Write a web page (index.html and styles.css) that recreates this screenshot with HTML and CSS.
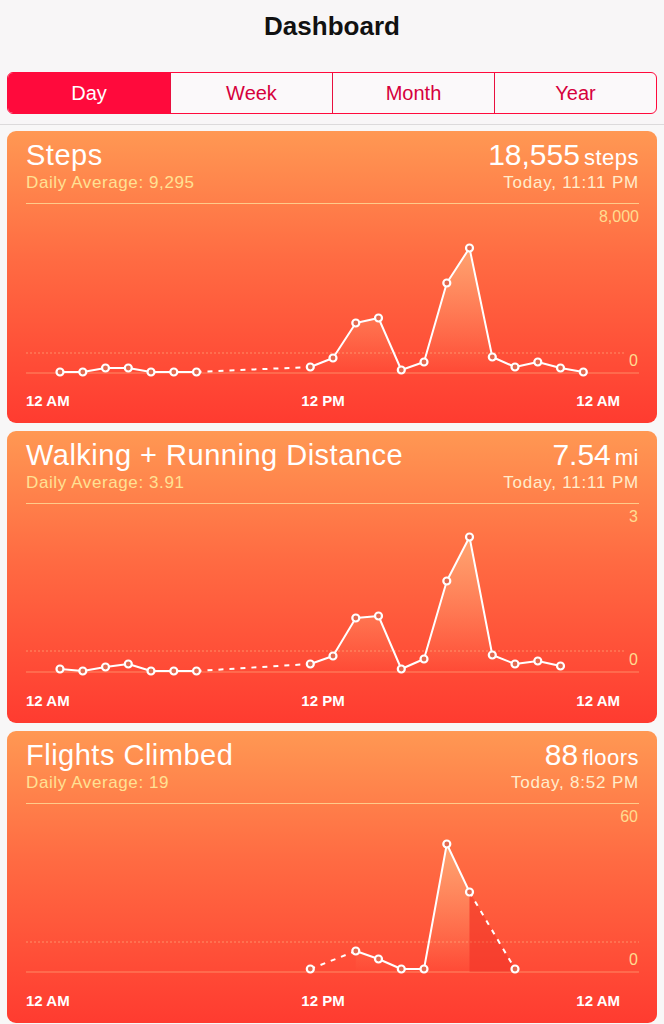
FILE: index.html
```html
<!DOCTYPE html>
<html lang="en">
<head>
    <meta charset="UTF-8">
    <meta name="viewport" content="width=device-width, initial-scale=1.0">
    <title>Dashboard</title>
    <link rel="stylesheet" href="styles.css">
</head>
<body>

    <div class="top">
        <h1>Dashboard</h1>
        <div class="segments">
            <span class="active">Day</span>
            <span>Week</span>
            <span>Month</span>
            <span>Year</span>
        </div>
    </div>

    <div class="cards">

        <!-- Steps -->
        <div class="card">
            <div class="card-head">
                <div>
                    <div class="name">Steps</div>
                    <div class="avg">Daily Average: 9,295</div>
                </div>
                <div class="right">
                    <div class="total">18,555<small>steps</small></div>
                    <div class="when">Today, 11:11 PM</div>
                </div>
            </div>
            <div class="chart">
                <svg width="613" height="182" viewBox="0 0 613 182">
                    <defs>
                        <linearGradient id="fill1" x1="0" y1="40" x2="0" y2="168" gradientUnits="userSpaceOnUse">
                            <stop offset="0" stop-color="#ffc890" stop-opacity="0.6"/>
                            <stop offset="1" stop-color="#ffc890" stop-opacity="0"/>
                        </linearGradient>
                    </defs>
                    <text class="lbl" x="613" y="18">8,000</text>
                    <line class="grid-dash" x1="0" y1="149" x2="600" y2="149"/>
                    <line class="grid-base" x1="0" y1="169" x2="613" y2="169"/>
                    <text class="lbl" x="612" y="162">0</text>
                    <polygon fill="url(#fill1)" points="284.3,163 307,154 329.8,119 352.5,114 375.3,166 398,158 420.8,79 443.5,44 466.3,153 489,163 511.8,158 534.5,164 557.3,168 557.3,169 284.3,169"/>
                    <line class="dash" x1="170.5" y1="168" x2="284.3" y2="163"/>
                    <polyline class="line" points="34,168 56.8,168 79.5,164 102.3,164 125,168 147.8,168 170.5,168"/>
                    <polyline class="line" points="284.3,163 307,154 329.8,119 352.5,114 375.3,166 398,158 420.8,79 443.5,44 466.3,153 489,163 511.8,158 534.5,164 557.3,168"/>
                    <g class="dots">
                        <circle cx="34" cy="168" r="3"/><circle cx="56.8" cy="168" r="3"/><circle cx="79.5" cy="164" r="3"/>
                        <circle cx="102.3" cy="164" r="3"/><circle cx="125" cy="168" r="3"/><circle cx="147.8" cy="168" r="3"/>
                        <circle cx="170.5" cy="168" r="3"/><circle cx="284.3" cy="163" r="3"/><circle cx="307" cy="154" r="3"/>
                        <circle cx="329.8" cy="119" r="3"/><circle cx="352.5" cy="114" r="3"/><circle cx="375.3" cy="166" r="3"/>
                        <circle cx="398" cy="158" r="3"/><circle cx="420.8" cy="79" r="3"/><circle cx="443.5" cy="44" r="3"/>
                        <circle cx="466.3" cy="153" r="3"/><circle cx="489" cy="163" r="3"/><circle cx="511.8" cy="158" r="3"/>
                        <circle cx="534.5" cy="164" r="3"/><circle cx="557.3" cy="168" r="3"/>
                    </g>
                </svg>
            </div>
            <div class="axis"><span>12 AM</span><span>12 PM</span><span>12 AM</span></div>
        </div>

        <!-- Walking + Running Distance -->
        <div class="card">
            <div class="card-head">
                <div>
                    <div class="name">Walking + Running Distance</div>
                    <div class="avg">Daily Average: 3.91</div>
                </div>
                <div class="right">
                    <div class="total">7.54<small>mi</small></div>
                    <div class="when">Today, 11:11 PM</div>
                </div>
            </div>
            <div class="chart">
                <svg width="613" height="182" viewBox="0 0 613 182">
                    <defs>
                        <linearGradient id="fill2" x1="0" y1="30" x2="0" y2="168" gradientUnits="userSpaceOnUse">
                            <stop offset="0" stop-color="#ffc890" stop-opacity="0.6"/>
                            <stop offset="1" stop-color="#ffc890" stop-opacity="0"/>
                        </linearGradient>
                    </defs>
                    <text class="lbl" x="612" y="18">3</text>
                    <line class="grid-dash" x1="0" y1="147" x2="600" y2="147"/>
                    <line class="grid-base" x1="0" y1="168" x2="613" y2="168"/>
                    <text class="lbl" x="612" y="161">0</text>
                    <polygon fill="url(#fill2)" points="284.3,160 307,152 329.8,114 352.5,112 375.3,165 398,155 420.8,77 443.5,33 466.3,151 489,160 511.8,157 534.5,162 534.5,168 284.3,168"/>
                    <line class="dash" x1="170.5" y1="167" x2="284.3" y2="160"/>
                    <polyline class="line" points="34,165 56.8,167 79.5,163 102.3,160 125,167 147.8,167 170.5,167"/>
                    <polyline class="line" points="284.3,160 307,152 329.8,114 352.5,112 375.3,165 398,155 420.8,77 443.5,33 466.3,151 489,160 511.8,157 534.5,162"/>
                    <g class="dots">
                        <circle cx="34" cy="165" r="3"/><circle cx="56.8" cy="167" r="3"/><circle cx="79.5" cy="163" r="3"/>
                        <circle cx="102.3" cy="160" r="3"/><circle cx="125" cy="167" r="3"/><circle cx="147.8" cy="167" r="3"/>
                        <circle cx="170.5" cy="167" r="3"/><circle cx="284.3" cy="160" r="3"/><circle cx="307" cy="152" r="3"/>
                        <circle cx="329.8" cy="114" r="3"/><circle cx="352.5" cy="112" r="3"/><circle cx="375.3" cy="165" r="3"/>
                        <circle cx="398" cy="155" r="3"/><circle cx="420.8" cy="77" r="3"/><circle cx="443.5" cy="33" r="3"/>
                        <circle cx="466.3" cy="151" r="3"/><circle cx="489" cy="160" r="3"/><circle cx="511.8" cy="157" r="3"/>
                        <circle cx="534.5" cy="162" r="3"/>
                    </g>
                </svg>
            </div>
            <div class="axis"><span>12 AM</span><span>12 PM</span><span>12 AM</span></div>
        </div>

        <!-- Flights Climbed -->
        <div class="card">
            <div class="card-head">
                <div>
                    <div class="name">Flights Climbed</div>
                    <div class="avg">Daily Average: 19</div>
                </div>
                <div class="right">
                    <div class="total">88<small>floors</small></div>
                    <div class="when">Today, 8:52 PM</div>
                </div>
            </div>
            <div class="chart">
                <svg width="613" height="182" viewBox="0 0 613 182">
                    <defs>
                        <linearGradient id="fill3" x1="0" y1="40" x2="0" y2="168" gradientUnits="userSpaceOnUse">
                            <stop offset="0" stop-color="#ffc890" stop-opacity="0.6"/>
                            <stop offset="1" stop-color="#ffc890" stop-opacity="0"/>
                        </linearGradient>
                    </defs>
                    <text class="lbl" x="612" y="18">60</text>
                    <line class="grid-dash" x1="0" y1="138" x2="613" y2="138"/>
                    <line class="grid-base" x1="0" y1="168" x2="613" y2="168"/>
                    <text class="lbl" x="612" y="161">0</text>
                    <polygon fill="url(#fill3)" points="329.8,147 352.5,155 375.3,165 398,165 420.8,40 443.5,88 443.5,168 329.8,168"/>
                    <polygon class="gap-fill" points="443.5,88 489,165 489,168 443.5,168"/>
                    <line class="dash" x1="284.3" y1="165" x2="329.8" y2="147"/>
                    <line class="dash" x1="443.5" y1="88" x2="489" y2="165"/>
                    <polyline class="line" points="329.8,147 352.5,155 375.3,165 398,165 420.8,40 443.5,88"/>
                    <g class="dots">
                        <circle cx="284.3" cy="165" r="3"/><circle cx="329.8" cy="147" r="3"/><circle cx="352.5" cy="155" r="3"/>
                        <circle cx="375.3" cy="165" r="3"/><circle cx="398" cy="165" r="3"/><circle cx="420.8" cy="40" r="3"/>
                        <circle cx="443.5" cy="88" r="3"/><circle cx="489" cy="165" r="3"/>
                    </g>
                </svg>
            </div>
            <div class="axis"><span>12 AM</span><span>12 PM</span><span>12 AM</span></div>
        </div>

    </div>

</body>
</html>
```

FILE: styles.css
```css
* {
    box-sizing: border-box;
}
body {
    margin: 0;
    background-color: #f8f7f7;
    font-family: "Liberation Sans", Arial, sans-serif;
}
.top {
    background: #f8f6f7;
    padding: 12px 7px 10px;
    border-bottom: 1px solid #dcdadb;
}
.top h1 {
    margin: 0;
    font-size: 26px;
    line-height: 28px;
    font-weight: bold;
    text-align: center;
    color: #111;
}
.segments {
    display: grid;
    grid-template-columns: repeat(4, 1fr);
    margin-top: 32px;
    height: 42px;
    border: 1.5px solid #ff0a3c;
    border-radius: 6px;
    overflow: hidden;
    background: #fbf9fa;
}
.segments span {
    display: flex;
    align-items: center;
    justify-content: center;
    font-size: 20px;
    color: #d6003c;
    border-left: 1.5px solid #e8103f;
}
.segments span:first-child {
    border-left: none;
}
.segments .active {
    background: #ff0a3c;
    color: #fff;
}
.cards {
    display: flex;
    flex-direction: column;
    gap: 8px;
    padding: 6px 7px 8px;
}
.card {
    border-radius: 9px;
    background: linear-gradient(#ff9853, #ff6a42 45%, #ff3b30);
    color: #fff;
    padding-bottom: 9px;
}
.card-head {
    display: flex;
    justify-content: space-between;
    height: 72px;
    padding: 8px 18px 0 19px;
}
.name {
    font-size: 29px;
    line-height: 32px;
    letter-spacing: 0.5px;
}
.avg {
    margin-top: 1px;
    font-size: 17px;
    line-height: 22px;
    letter-spacing: 0.6px;
    color: #ffe194;
}
.right {
    text-align: right;
}
.total {
    height: 32px;
    font-size: 30px;
    line-height: 32px;
}
.total small {
    margin-left: 4px;
    font-size: 22px;
    line-height: 0;
    letter-spacing: 0.5px;
}
.when {
    margin-top: 1px;
    font-size: 17px;
    line-height: 22px;
    letter-spacing: 0.8px;
    color: #ffedcc;
}
.chart {
    margin: 0 18px 0 19px;
    border-top: 1px solid rgba(255, 228, 160, 0.75);
}
.chart svg {
    display: block;
}
.lbl {
    font-size: 16px;
    fill: #ffdc90;
    text-anchor: end;
}
.grid-dash {
    stroke: rgba(255, 220, 160, 0.45);
    stroke-width: 1;
    stroke-dasharray: 2 2;
}
.grid-base {
    stroke: rgba(255, 220, 160, 0.45);
    stroke-width: 1;
}
.line {
    fill: none;
    stroke: #fff;
    stroke-width: 2;
    stroke-linejoin: round;
}
.dash {
    stroke: #fff;
    stroke-width: 2;
    stroke-dasharray: 5 6;
}
.gap-fill {
    fill: rgba(230, 30, 25, 0.3);
}
.dots circle {
    r: 3.5px;
    fill: #e06a50;
    stroke: #fff;
    stroke-width: 2.2;
}
.axis {
    display: flex;
    justify-content: space-between;
    align-items: center;
    height: 28px;
    margin: 0 37px 0 19px;
    font-size: 15px;
    font-weight: bold;
}
```
